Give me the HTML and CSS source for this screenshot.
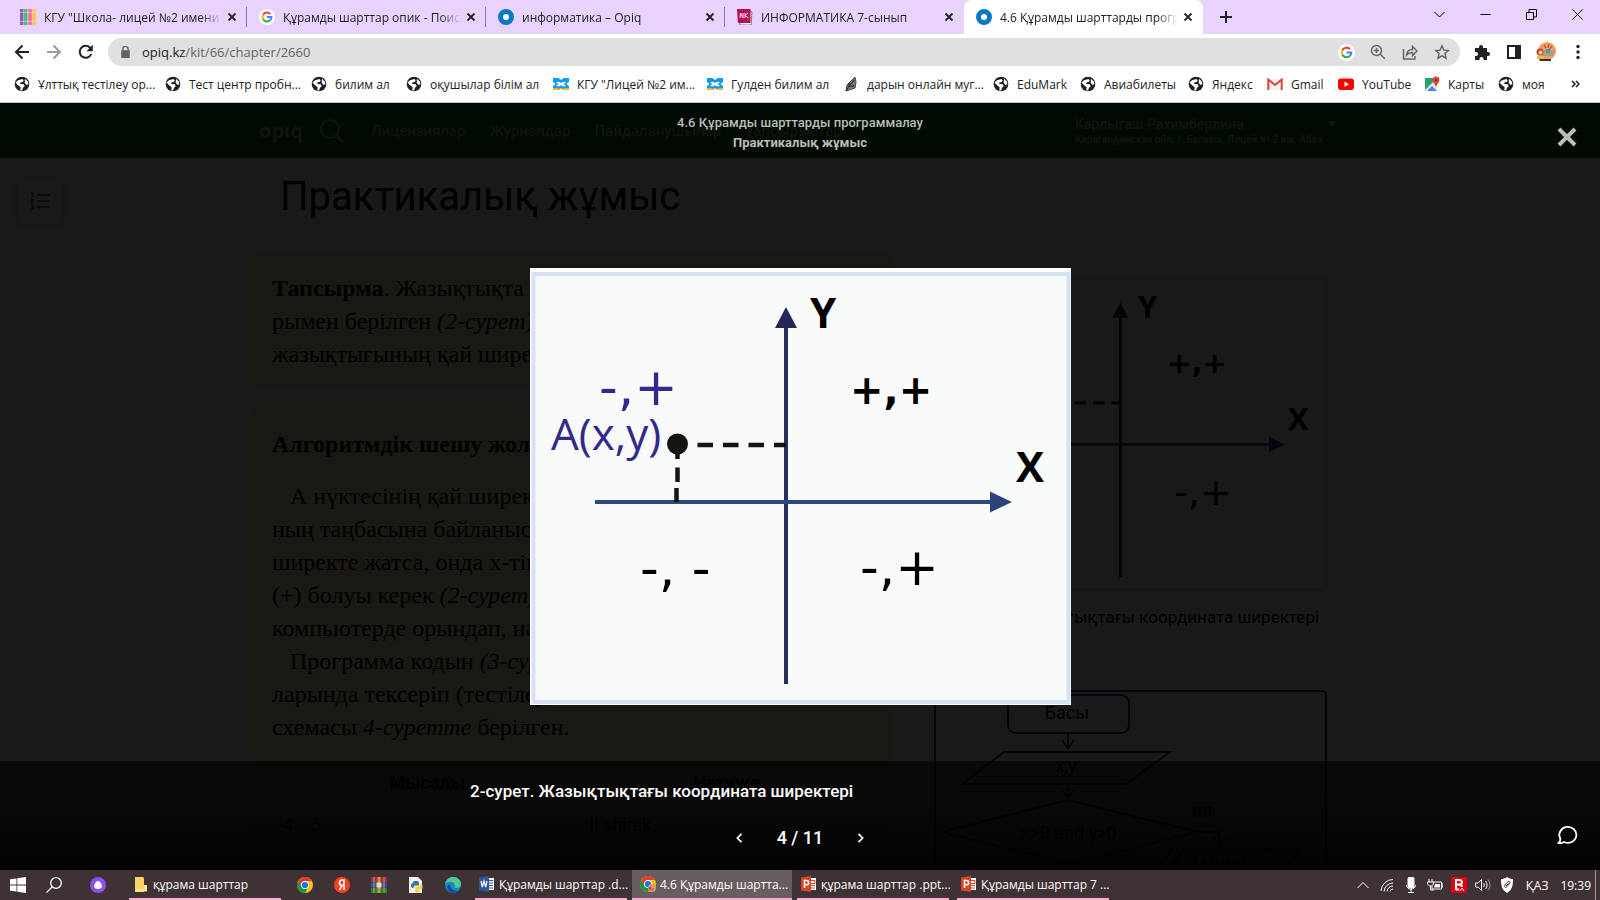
FILE: index.html
```html
<!DOCTYPE html>
<html lang="kk">
<head>
<meta charset="utf-8">
<title>4.6 Құрамды шарттарды программалау</title>
<link rel="stylesheet" href="styles.css">
</head>
<body>
<svg class="sprite" aria-hidden="true">
  <symbol id="globe" viewBox="0 0 16 16"><circle cx="8" cy="8" r="7.3" fill="#202124"/><path d="M1.500 6.500 4 4.200 8.500 3l1.200 1.400L8.500 6 6.300 6.400 6.300 8l3.500.300.900 1.900L9 11.800l-.900 2.700H6.300l.300-3.300L3.800 9z" fill="#fff"/><path d="m11 2.800 2.800 2.600.600 3-2.200.300-1.500-2z" fill="#fff"/></symbol>
  <symbol id="google" viewBox="0 0 18 18"><circle cx="9" cy="9" r="9" fill="#fff"/><g fill="none" stroke-width="2.300"><path d="M4.600 6.500A5 5 0 0 1 12.700 5.600" stroke="#ea4335"/><path d="M4.600 6.500a5 5 0 0 0 0 5" stroke="#fbbc05"/><path d="M4.600 11.400a5 5 0 0 0 7.800 1.300" stroke="#34a853"/><path d="M9 9h5a5 5 0 0 1-1.600 3.700" stroke="#4285f4"/></g></symbol>
  <symbol id="opiq" viewBox="0 0 16 16"><circle cx="8" cy="8" r="5.500" fill="#fff" stroke="#0879c4" stroke-width="5"/></symbol>
  <symbol id="cross" viewBox="0 0 10 10"><path d="m1.500 1.500 7 7m0-7-7 7" stroke="#202124" stroke-width="1.800"/></symbol>
  <symbol id="bilim" viewBox="0 0 16 16"><path d="M0 2h5.500L8 4l2.500-2H16v4l-2.500 2 2.500 2v4h-5.500L8 12l-2.500 2H0v-4l2.500-2L0 6z" fill="#129bf4"/><path d="M3.500 6h3L8 7l1.500-1h3v1L10 8l2.500 1.200v1h-3L8 9l-1.500 1.200h-3v-1L6 8 3.500 7z" fill="#fff"/><path d="M0 12h5l1 1 2-1 2 1 1-1h5v2h-5.500L8 12.800 5.500 14H0z" fill="#f5b32c"/></symbol>
  <symbol id="chrome" viewBox="0 0 16 16"><circle cx="8" cy="8" r="8" fill="#fbc116"/><path d="M1.070 4A8 8 0 0 1 14.930 4H8L4.540 10z" fill="#e33b2e"/><path d="M1.070 4A8 8 0 0 0 8 16l3.460-6H4.540z" fill="#229342"/><circle cx="8" cy="8" r="4" fill="#fff"/><circle cx="8" cy="8" r="3.100" fill="#1a73e8"/></symbol>
  <symbol id="ppt" viewBox="0 0 16 16"><path d="M8 2h7v12H8z" fill="#fff"/><path d="M10 4.500h4v3h-4M10 9.500h4M10 12h4" stroke="#d24726" fill="none"/><path d="M0 1.500 10 0v16L0 14.500z" fill="#d24726"/><path d="M3.500 12V4.500H5.500a2 2 0 0 1 0 4.300h-2" fill="none" stroke="#fff" stroke-width="1.600"/></symbol>
</svg>

<header class="browser">
  <div class="tabstrip">
    <nav class="tabs" aria-label="Tabs">
      <div class="tab"><svg viewBox="0 0 16 16"><path fill="#8b62b5" d="M0 0h3.500v16H0z"/><path fill="#54b878" d="M4 0h3.500v16H4z"/><path fill="#fa6d92" d="M8.300 0h3.500v16H8.300z"/><path fill="#fdc14f" d="M12.500 0H16v16h-3.500z"/><path fill="#fff" opacity=".4" d="M0 3h16v1H0zM0 12h16v1H0z"/></svg><span class="tab-title">КГУ "Школа- лицей №2 имени А</span><button aria-label="Close tab"><svg><use href="#cross"/></svg></button></div>
      <div class="tab"><svg><use href="#google"/></svg><span class="tab-title">Құрамды шарттар опик - Поиск</span><button aria-label="Close tab"><svg><use href="#cross"/></svg></button></div>
      <div class="tab"><svg><use href="#opiq"/></svg><span class="tab-title">информатика – Opiq</span><button aria-label="Close tab"><svg><use href="#cross"/></svg></button></div>
      <div class="tab"><svg viewBox="0 0 16 16"><path d="m3 2 12 1-1 13H3z" fill="#fff" stroke="#8f6c70"/><path d="M0 0h13.500v14H1z" fill="#b90d55"/><path d="m3 9 .5-5 2.500 5V4m2 0v5m3-5L8 6.500 11.500 9" fill="none" stroke="#fff" stroke-width=".9"/></svg><span class="tab-title">ИНФОРМАТИКА 7-сынып</span><button aria-label="Close tab"><svg><use href="#cross"/></svg></button></div>
      <div class="tab active"><svg><use href="#opiq"/></svg><span class="tab-title">4.6 Құрамды шарттарды програ</span><button aria-label="Close tab"><svg><use href="#cross"/></svg></button></div>
      <button class="newtab" aria-label="New tab"><svg viewBox="0 0 12 12"><path d="M6 0v12M0 6h12" stroke="#202124" stroke-width="2"/></svg></button>
    </nav>
    <div class="window-controls">
      <button aria-label="Search tabs"><svg viewBox="0 0 11 11"><path d="m.5 3 5 5 5-5"/></svg></button>
      <button aria-label="Minimize"><svg viewBox="0 0 11 11"><path d="M.5 5.500h10"/></svg></button>
      <button aria-label="Restore"><svg viewBox="0 0 11 11"><path d="M.5 3.500h7v7h-7zM3 3V.5h7.500V8H8"/></svg></button>
      <button aria-label="Close"><svg viewBox="0 0 11 11"><path d="m.5.5 10 10m0-10-10 10"/></svg></button>
    </div>
  </div>
  <div class="toolbar">
    <button aria-label="Back"><svg viewBox="0 0 16 16"><path d="M15 8H2m6.500-6.500L2 8l6.500 6.500" fill="none" stroke="#202124" stroke-width="2"/></svg></button>
    <button aria-label="Forward"><svg viewBox="0 0 16 16"><path d="M1 8h13M7.500 1.500 14 8l-6.500 6.500" fill="none" stroke="#9c9c9c" stroke-width="2"/></svg></button>
    <button aria-label="Reload"><svg viewBox="0 0 16 16"><path d="M13.300 10A6 6 0 1 1 12.400 4" fill="none" stroke="#202124" stroke-width="2"/><path d="M14.800.8v6.400H8.500z" fill="#202124"/></svg></button>
    <div class="omnibox">
      <svg class="lock" viewBox="0 0 10 14"><path d="M0 5h10v9H0z" fill="#5f6368"/><path d="M2 6V3.500a3 3 0 0 1 6 0V6" fill="none" stroke="#5f6368" stroke-width="1.600"/></svg>
      <a class="url" href="#"><b>opiq.kz</b>/kit/66/chapter/2660</a>
      <button aria-label="Google"><svg><use href="#google"/></svg></button>
      <button aria-label="Zoom"><svg viewBox="0 0 16 16" class="line"><circle cx="6.500" cy="6.500" r="5"/><path d="m10.300 10.300 4.500 4.500M4 6.500h5M6.500 4v5" /></svg></button>
      <button aria-label="Share"><svg viewBox="0 0 16 16" class="line"><path d="M1.500 5v10H13v-3M4.500 11c.5-4 3-5.500 6-5.500V2.500L15 7l-4.500 4.500v-3c-3 0-4.500.8-6 2.500z"/></svg></button>
      <button aria-label="Bookmark"><svg viewBox="0 0 16 16" class="line"><path d="m8 1.800 1.900 4.300 4.600.4-3.500 3.100 1 4.600L8 11.800l-4 2.400 1-4.600-3.500-3.100 4.600-.4z"/></svg></button>
    </div>
    <button aria-label="Extensions"><svg viewBox="0 0 16 16"><path d="M1 4h4V3a2 2 0 0 1 4 0v1h4v4h1a2 2 0 0 1 0 4h-1v4H9.500v-1a2 2 0 0 0-4 0v1H1v-4h1a2 2 0 0 0 0-4H1z" fill="#202124"/></svg></button>
    <button aria-label="Side panel"><svg viewBox="0 0 16 16"><path d="M2 2h12v12H2z" fill="none" stroke="#202124" stroke-width="2"/><path d="M9 2h5v12H9z" fill="#202124"/></svg></button>
    <button aria-label="Profile"><svg class="avatar" viewBox="0 0 20 20"><circle cx="11" cy="9" r="9" fill="#f59a5d"/><path d="m8 3 2 3m3-4-1 4m4-2-2 3" stroke="#a33a2c"/><path d="M8 8h10v6H7z" fill="#ae9c83"/><path d="M10 7h4v4h-4z" fill="#3d9e9b"/><circle cx="4" cy="10" r="3.500" fill="#c84225"/><circle cx="4.500" cy="10.500" r="2" fill="#f8cf9d"/><path d="M1 14h7v3H1z" fill="#edbd31"/><path d="M3 17h12v2H4z" fill="#33313a"/></svg></button>
    <button aria-label="Menu"><svg viewBox="0 0 16 16"><g fill="#202124"><circle cx="8" cy="2.500" r="1.700"/><circle cx="8" cy="8" r="1.700"/><circle cx="8" cy="13.500" r="1.700"/></g></svg></button>
  </div>
  <nav class="bookmarks" aria-label="Bookmarks">
    <a href="#"><svg><use href="#globe"/></svg>Ұлттық тестілеу ор...</a>
    <a href="#"><svg><use href="#globe"/></svg>Тест центр пробн...</a>
    <a href="#"><svg><use href="#globe"/></svg>билим ал</a>
    <a href="#"><svg><use href="#globe"/></svg>оқушылар білім ал</a>
    <a href="#"><svg><use href="#bilim"/></svg>КГУ "Лицей №2 им...</a>
    <a href="#"><svg><use href="#bilim"/></svg>Гулден билим ал</a>
    <a href="#"><svg viewBox="0 0 16 16"><path d="M3 15 4 9l6-6 2-2 1 5-1 6-6 2z" fill="#777" stroke="#444"/><path d="m3 15 3-5 5-6M6 10h5M6 10V7" fill="none" stroke="#222"/></svg>дарын онлайн муг...</a>
    <a href="#"><svg><use href="#globe"/></svg>EduMark</a>
    <a href="#"><svg><use href="#globe"/></svg>Авиабилеты</a>
    <a href="#"><svg><use href="#globe"/></svg>Яндекс</a>
    <a href="#"><svg viewBox="0 0 16 16"><path d="M2 3h12v11H2z" fill="#f1f1f1"/><path d="M1.300 14V3.500L8 9l6.700-5.500V14" fill="none" stroke="#db4437" stroke-width="2"/></svg>Gmail</a>
    <a href="#"><svg viewBox="0 0 16 16"><rect y="2.500" width="16" height="11.500" rx="3" fill="#f00"/><path d="m6.500 5.500 4.500 2.700-4.500 2.700z" fill="#fff"/></svg>YouTube</a>
    <a href="#"><svg viewBox="0 0 16 16"><path d="M1 2h12v13H1z" fill="#1fa463"/><path d="M1 14 12 3l1 2v10H1z" fill="#e8e8e8"/><path d="m3 15 5-5 5 5z" fill="#4a86e8"/><path d="M12 11C11 8 8.500 6.500 8.500 4a3.500 3.500 0 0 1 7 0c0 2.500-2.500 4-3.500 7z" fill="#dd4b3e"/><circle cx="12" cy="4" r="1.200" fill="#84241c"/></svg>Карты</a>
    <a href="#"><svg><use href="#globe"/></svg>моя</a>
    <button aria-label="More bookmarks"><svg viewBox="0 0 10 8"><path d="m1 1 3 3-3 3m4-6 3 3-3 3" fill="none" stroke="#202124" stroke-width="1.500"/></svg></button>
  </nav>
</header>

<main class="viewport">
  <div class="site">
    <div class="site-header">
      <div class="wrap site-bar">
        <b class="logo">opıq</b>
        <svg class="site-search" viewBox="0 0 24 24"><circle cx="10" cy="10" r="9"/><path d="m16.500 16.500 7 7"/></svg>
        <nav class="site-nav"><a href="#">Лицензиялар</a><a href="#">Журналдар</a><a href="#">Пайдаланушылар</a><a href="#">Тапсырыстар</a></nav>
        <div class="user"><span>Карлыгаш Рахимберлина</span><small>Карагандинская обл, г. Балхаш, Лицей № 2 им. Абая</small></div>
        <svg class="caret" viewBox="0 0 10 6"><path d="M0 0h10L5 6z"/></svg>
      </div>
    </div>
    <button class="contents" aria-label="Contents"><svg viewBox="0 0 20 18"><path d="M7 3h13M7 9h13M7 15h13M1 1h1.500v4M1 7.500h2L1 10.500h2M1 13h2v3.500H1" fill="none" stroke="#1d7a1d" stroke-width="1.500"/></svg></button>
    <div class="wrap">
      <h1>Практикалық жұмыс</h1>
      <div class="columns">
        <div class="text-column">
          <section class="task"><p><b>Тапсырма</b>. Жазықтықта<br>рымен берілген <i>(2-сурет)</i><br>жазықтығының қай ширегінде</p></section>
          <section class="task solution">
            <h2>Алгоритмдік шешу жолы</h2>
            <p>&nbsp;&nbsp; А нүктесінің қай ширекте<br>ның таңбасына байланысты<br>ширекте жатса, онда x-тің<br>(+) болуы керек <i>(2-сурет)</i><br>компьютерде орындап, нәтиже<br>&nbsp;&nbsp; Программа кодын <i>(3-сурет)</i><br>ларында тексеріп (тестілеу)<br>схемасы <i>4-суретте</i> берілген.</p>
            <table><thead><tr><th>Мысалы</th><th>Нәтиже</th></tr></thead><tbody><tr><td>-4 &nbsp;&nbsp; 5</td><td>II shirek</td></tr></tbody></table>
          </section>
        </div>
        <aside class="figures">
          <figure>
            <svg viewBox="0 0 541 437"><use href="#plane"/></svg>
            <figcaption>2-сурет. Жазықтықтағы координата ширектері</figcaption>
          </figure>
          <figure>
            <svg class="flowchart" viewBox="0 0 394 260">
              <rect x="1" y="1" width="391" height="270" rx="4"/>
              <rect x="74" y="5" width="121" height="38" rx="8"/>
              <path d="M134 43v16m-6-9 6 9 6-9M70 62h166l-44 32H28zM134 94v14m-6-8 6 8 6-8M134 110l130 32-130 32L8 142zM264 142h21v14m-6-9 6 9 6-9M239 158h127l-26 35H210zM252 158l-30 35M134 174v20"/>
              <text x="133" y="29">Басы</text><text x="132" y="82">x,y</text><text x="135" y="149">x&gt;0 and y&gt;0</text><text x="268" y="127">ия</text><text x="287" y="179">I shirek</text>
            </svg>
          </figure>
        </aside>
      </div>
    </div>
  </div>

  <div class="lightbox" role="dialog" aria-label="2-сурет">
    <div class="lightbox-head"><span>4.6 Құрамды шарттарды программалау</span><b>Практикалық жұмыс</b>
      <button class="lightbox-close" aria-label="Жабу"><svg viewBox="0 0 20 20"><path d="m2 2 16 16m0-16L2 18"/></svg></button>
    </div>
    <div class="stage">
      <svg class="picture" viewBox="0 0 541 437">
        <g id="plane">
          <rect width="541" height="437" fill="#fff"/>
          <rect x="3.500" y="6" width="535" height="428" fill="#f9fbfa" stroke="#d7e1f4" stroke-width="4"/>
          <path d="M256 416V55" stroke="#292d60" stroke-width="4"/><path d="m256 39 11 21h-22z" fill="#242858"/>
          <path d="M65 234h400" stroke="#2f4880" stroke-width="4"/><path d="m482 234-22 10.500v-21z" fill="#2b4378"/>
          <path d="M167.500 177H256" stroke="#15140f" stroke-width="4.500" stroke-dasharray="15.500 10"/>
          <path d="M147.500 186v5m0 8.500V214m-1 6v14" stroke="#15140f" stroke-width="4.500"/>
          <circle cx="147.500" cy="176" r="10.500" fill="#15140f"/>
          <g class="axis"><text x="280" y="60">Y</text><text x="486" y="214">X</text></g>
          <text class="point" x="21" y="182">A(x,y)</text>
          <g class="sign"><text class="violet" x="69" y="137">-,+</text><text x="110" y="318">-, -</text><text x="330" y="317">-,+</text></g>
          <text class="sign-bold" x="320" y="136">+,+</text>
        </g>
      </svg>
    </div>
    <div class="lightbox-foot">
      <div class="foot-inner">
        <p>2-сурет. Жазықтықтағы координата ширектері</p>
        <div class="pager"><button aria-label="Алдыңғы"><svg viewBox="0 0 8 12"><path d="M7 1 2 6l5 5"/></svg></button><span>4 / 11</span><button aria-label="Келесі"><svg viewBox="0 0 8 12"><path d="m1 1 5 5-5 5"/></svg></button></div>
      </div>
      <button class="chat" aria-label="Пікір"><svg viewBox="0 0 22 20"><path d="M3.300 13.500A8.500 8 0 1 1 7 17c-1.500 1-3.500 1.500-5.500 1 1.500-1.200 2-2.700 1.800-4.500z" fill="none" stroke="#fff" stroke-width="1.800"/></svg></button>
    </div>
  </div>
</main>

<footer class="taskbar">
  <button class="sys" aria-label="Start"><svg viewBox="0 0 16 16"><path d="m0 2.300 6.500-.9v6.200H0zM7.300 1.300 16 0v7.600H7.300zM0 8.400h6.500v6.200L0 13.700zM7.300 8.400H16V16l-8.700-1.200z" fill="#fff"/></svg></button>
  <button class="sys" aria-label="Search"><svg viewBox="0 0 16 16"><circle cx="10" cy="6" r="5.300" fill="none" stroke="#fff" stroke-width="1.300"/><path d="M6.300 9.800.5 15.600" stroke="#fff" stroke-width="1.300"/></svg></button>
  <button class="sys alice" aria-label="Alice"><svg viewBox="0 0 16 16"><circle cx="8" cy="8" r="8" fill="#8c4dfa"/><path d="M8 4c2 0 4 3.500 4 5.300C12 11 10 12 8 12s-4-1-4-2.700C4 7.500 6 4 8 4z" fill="#fff"/></svg></button>
  <button class="task-button"><svg viewBox="0 0 16 16"><path d="M2 1h8l1 1v14H2z" fill="#f8d264"/><path d="M11 9h3v6.500H3V13h8z" fill="#fbe59b"/></svg><span>құрама шарттар</span></button>
  <div class="pinned">
    <button aria-label="Chrome"><svg><use href="#chrome"/></svg></button>
    <button aria-label="Yandex"><svg viewBox="0 0 16 16"><circle cx="8" cy="8" r="8" fill="#fc3f1d"/><path d="M10 13V3H8.500a2.700 2.700 0 0 0-1 5.300H10M8 8.500 5.500 13" fill="none" stroke="#fff" stroke-width="1.600"/></svg></button>
    <button aria-label="WinRAR"><svg viewBox="0 0 16 16"><path d="M0 0h16v5H0z" fill="#a62c4c"/><path d="M0 5.500h16v5H0z" fill="#3151b5"/><path d="M0 11h16v5H0z" fill="#27853b"/><path d="M6.500 0h3v16h-3z" fill="#c99a33"/><path d="M5.500 5.500h5v5h-5z" fill="#eadbae"/><path d="M3 0v16M13 0v16" stroke="#e0a549" stroke-width=".8"/></svg></button>
    <button aria-label="Python"><svg viewBox="0 0 16 16"><path d="M1 0h9l4 4v12H1z" fill="#f2f2f2"/><path d="M5 9V5.500C5 4 6 4 8 4s3 .4 3 2v2.500H7C5.500 8.500 6 11 5 11s-2-.5-2-2.500S4 6 6 6" fill="#3974a8"/><path d="M12 7c2 0 2.500 1 2.500 3S14 12.500 12.500 12.500H10v1h2c0 1.500-1 2-2.500 2S7 15 7 13.500V11c0-1 .5-1.500 1.500-1.500H11c1 0 1-1 1-2.500z" fill="#ffd141"/></svg></button>
    <button aria-label="Edge"><svg viewBox="0 0 16 16"><circle cx="8" cy="8" r="8" fill="#1785cf"/><path d="M.3 7C1 2.500 4.500 0 8 0c5 0 8 3.500 8 7 0 2.500-2 4-4.500 4-2 0-2-1-1.500-2C10 5 3 3 .3 7z" fill="#4dcc8d"/><path d="M5.500 8C5 12 8 14.500 13.500 13.500 9 18 1.500 15 2.500 9.500 3 7.500 4 7 5.500 8z" fill="#114f92"/></svg></button>
  </div>
  <button class="task-button"><svg viewBox="0 0 16 16"><path d="M8 2h7v12H8z" fill="#fff"/><path d="M10 4.500h4M10 7h4M10 9.500h4M10 12h4" stroke="#2b579a"/><path d="M0 1.500 10 0v16L0 14.500z" fill="#2b579a"/><path d="m2 5 1.300 6L5 5l1.700 6L8 5" fill="none" stroke="#fff" stroke-width="1.200"/></svg><span>Құрамды шарттар .d...</span></button>
  <button class="task-button current"><svg viewBox="0 0 16 16"><use href="#chrome"/><circle cx="12" cy="12" r="4" fill="#e49b6c"/><path d="M9 12h5v3h-4z" fill="#b8866d"/><circle cx="10" cy="12" r="1.300" fill="#c93d27"/></svg><span>4.6 Құрамды шартта...</span></button>
  <button class="task-button"><svg><use href="#ppt"/></svg><span>құрама шарттар .ppt...</span></button>
  <button class="task-button"><svg><use href="#ppt"/></svg><span>Құрамды шарттар 7 ...</span></button>
  <div class="tray">
    <svg viewBox="0 0 16 16"><path d="m2.500 11 5.500-5.500 5.500 5.500"/></svg>
    <svg viewBox="0 0 16 16"><path d="M2 14A12 12 0 0 1 14 2.500M5 14.500a9 9 0 0 1 9-8.500M8 14.500a6 6 0 0 1 6-5.500M11 14.500a3 3 0 0 1 3-2.500"/></svg>
    <svg viewBox="0 0 16 16"><rect x="5" y="0" width="6" height="11" rx="2" fill="#fff"/><path d="M3.500 8c0 5.500 9 5.500 9 0M8 12v3M5 15.500h6"/></svg>
    <svg viewBox="0 0 16 16"><path d="M6 5h8.500v7H5V9M2 2v3m3-3v3M.5 5h6v2l-2 2h-2l-2-2zM3.500 9v4H7M14.500 7H16v3h-1.500"/><path d="M8 7h5v3.500H7z" fill="#fff" stroke="none"/></svg>
    <svg viewBox="0 0 16 16"><path d="M0 0h16v16H0z" fill="#e3000f" stroke="none"/><path d="M5 13V3h3.500c3.300 0 3 4.500 0 4.500H5M8.500 8c1.500 0 2.500 1 2.500 2M5 12.500h3" stroke-width="2"/><path d="m9 14 2-3 2 3"/></svg>
    <svg viewBox="0 0 16 16"><path d="M.5 6h2.500l3.500-3.500v11L3 10H.5zM8.500 6c1 1 1 3 0 4M10.500 4c2 2 2 6 0 8"/><path d="M13 2.500c2.500 3 2.500 8 0 11" opacity=".5"/></svg>
    <svg viewBox="0 0 16 16"><path d="M8 0c2 1.500 4 2 6 2 0 7-1 11-6 14C3 13 2 9 2 2c2 0 4-.5 6-2z" fill="#fff" stroke="none"/><path d="M6 8 9 4.500c1.500-.5 2.500 1 1.500 2L8 9.500c-1.500 2-4 0-2-2M7 9l2.500-2.500" stroke="#3c3033"/></svg>
    <span class="lang">ҚАЗ</span><time>19:39</time>
  </div>
</footer>
</body>
</html>
```
FILE: styles.css
```css
* { box-sizing: border-box; }
body { margin: 0; height: 100vh; display: flex; flex-direction: column; overflow: hidden; font-family: "Open Sans", "Noto Sans", sans-serif; font-size: 12px; color: #202124; background: #000; }
button { border: 0; padding: 0; margin: 0; background: none; font: inherit; color: inherit; display: flex; align-items: center; justify-content: center; }
a { color: inherit; text-decoration: none; }
svg { display: block; flex: none; width: 16px; height: 16px; }
.sprite { position: absolute; width: 0; height: 0; }

/* Browser frame */
.browser { flex: none; background: #fff; border-bottom: 1px solid #c4c4c4; }
.tabstrip { display: flex; justify-content: space-between; height: 34px; background: #e8d3ff; }
.tabs { display: flex; padding-left: 8px; }
.tab { display: flex; align-items: center; width: 239px; padding: 0 7px 0 12px; background: linear-gradient(#877a96, #877a96) right center / 1px 20px no-repeat; }
.tab:nth-child(4) { background: none; }
.tab.active { background: #fff; border-radius: 8px 8px 0 0; }
.tab-title { flex: 1; min-width: 0; margin: 0 2px 0 8px; white-space: nowrap; overflow: hidden; mask-image: linear-gradient(90deg, #000 88%, transparent); }
.tab button { width: 16px; height: 16px; }
.tab button svg { width: 10px; height: 10px; }
.newtab { width: 46px; }
.newtab svg { width: 12px; height: 12px; }
.window-controls { display: flex; }
.window-controls button { width: 46px; height: 28px; }
.window-controls svg { width: 11px; height: 11px; fill: none; stroke: #000; }
.toolbar { display: flex; align-items: center; height: 36px; padding: 0 6px; }
.toolbar > button { width: 32px; height: 32px; }
.omnibox { flex: 1; display: flex; align-items: center; height: 28px; margin: 0 6px; padding: 0 2px 0 13px; border-radius: 14px; background: #e0e0e0; }
.omnibox button { width: 32px; }
.omnibox button:nth-of-type(1) svg { width: 17px; height: 17px; }
.lock { width: 9px; height: 12px; }
.url { flex: 1; margin-left: 12px; font-size: 13px; color: #5f6368; }
.url b { font-weight: 400; color: #202124; }
.line { fill: none; stroke: #5f6368; stroke-width: 1.400; }
.toolbar .avatar { width: 20px; height: 20px; }
.bookmarks { display: grid; grid-template-columns: 151px 146px 95px 147px 154px 136px 150px 87px 108px 79px 71px 86px 74px 1fr 24px; align-items: center; height: 32px; padding: 0 12px 4px 14px; }
.bookmarks a { display: flex; align-items: center; gap: 8px; white-space: nowrap; }
.bookmarks button svg { width: 10px; height: 8px; }

/* Textbook page */
.viewport { flex: 1; min-height: 0; position: relative; overflow: hidden; background: #fff; font-family: Roboto, sans-serif; color: #000; }
.wrap { max-width: 1100px; margin: 0 auto; }
.site-header { background: #006a00; }
.site-bar { display: flex; align-items: center; height: 55px; padding: 0 13px 0 9px; font-size: 15px; font-weight: 500; color: #b4b4b4; }
.logo { width: 61px; font: 700 20px "Open Sans", sans-serif; }
.site-search { width: 24px; height: 24px; fill: none; stroke: #b4b4b4; stroke-width: 2; }
.site-nav { flex: 1; display: flex; gap: 24px; margin-left: 27px; }
.user { width: 240px; white-space: nowrap; font-size: 14px; line-height: 16px; }
.user small { display: block; margin-top: 2px; font-size: 10px; font-weight: 700; line-height: 12px; }
.caret { width: 10px; height: 6px; margin: 0 0 14px 12px; fill: #b4b4b4; }
.contents { position: absolute; left: 18px; top: 75px; width: 44px; height: 46px; border-radius: 4px; box-shadow: 0 1px 8px #0004; }
.contents svg { width: 20px; height: 18px; }
h1 { margin: 0; padding: 16px 30px 32px; font-size: 40px; font-weight: 400; line-height: 46px; }
.columns { display: flex; gap: 20px; align-items: flex-start; }
.text-column { flex: 1; display: flex; flex-direction: column; gap: 18px; }
.task { padding: 20px 22px 17px; border-radius: 8px; background: #fff5bc; font: 24px/33px "Liberation Serif", serif; }
.task p { margin: 0; white-space: nowrap; }
.solution { padding-top: 22px; }
.solution h2 { margin: 0 0 19px; font-size: 24px; line-height: 33px; }
.task table { width: 100%; margin-top: 18px; border-collapse: collapse; font: 18px/42px Roboto, sans-serif; }
.task th { padding: 0; font-weight: 700; }
.task th:first-child { width: 52%; }
.task td { padding: 0 6px; }
.figures { width: 438px; display: flex; flex-direction: column; gap: 20px; }
figure { margin: 0; padding: 22px 22px 20px; border-radius: 8px; box-shadow: 0 0 6px #0002; font-size: 17px; text-align: center; }
figure svg { width: 100%; height: auto; }
figcaption { margin-top: 14px; line-height: 22px; white-space: nowrap; }
.flowchart { fill: none; stroke: #123a7c; stroke-width: 2; font-size: 18px; }
.flowchart text { fill: #000; stroke: none; text-anchor: middle; }

/* Coordinate plane */
.axis text { font: 700 42px "Open Sans", sans-serif; }
.point { font: 44px "Open Sans", sans-serif; fill: #33298a; }
.sign text { font: 52px "DejaVu Sans", sans-serif; }
.sign .violet { fill: #33298a; }
.sign-bold { font: 700 40px "DejaVu Sans", sans-serif; }

/* Lightbox */
.lightbox { position: absolute; inset: 0; display: flex; flex-direction: column; background: #000000e6; }
.lightbox-head { position: relative; height: 55px; display: flex; flex-direction: column; align-items: center; padding-top: 10px; font-size: 13px; line-height: 20px; font-weight: 500; color: #b9bcb9; }
.lightbox-close { position: absolute; right: 23px; top: 24px; }
.lightbox-close svg { width: 20px; height: 20px; stroke: #b9bcb9; stroke-width: 4; }
.stage { flex: 1; min-height: 0; display: flex; align-items: center; justify-content: center; padding-top: 54px; }
.picture { width: 541px; height: 437px; }
.lightbox-foot { position: relative; height: 109px; color: #fff; font-size: 17px; background: linear-gradient(#000000a6 30%, #000000e6); }
.foot-inner { width: 660px; margin: 0 auto; padding-top: 18px; }
.foot-inner p { margin: 0; line-height: 24px; font-weight: 500; }
.pager { display: flex; align-items: center; justify-content: center; gap: 34px; margin-top: 23px; font-size: 18px; line-height: 24px; font-weight: 500; }
.pager svg { width: 8px; height: 10px; fill: none; stroke: #fff; stroke-width: 2; }
.chat { position: absolute; right: 21px; bottom: 25px; }
.chat svg { width: 22px; height: 20px; }

/* Taskbar */
.taskbar { flex: none; display: flex; height: 30px; padding-right: 4px; color: #fff; background: #3e3234; }
.sys { width: 36px; }
.sys.alice { width: 52px; margin-right: 5px; }
.pinned { display: flex; margin-right: 4px; }
.pinned button { width: 37px; }
.task-button { width: 152px; margin-right: 5px; padding: 0 0 0 4px; gap: 4px; justify-content: flex-start; border-bottom: 2px solid #ffabd0; white-space: nowrap; }
.task-button.current { width: 160px; padding-left: 8px; background: #685d5f; }
.current + .task-button { margin-right: 8px; }
.tray { flex: 1; display: flex; align-items: center; justify-content: flex-end; gap: 8px; padding-right: 4px; border-right: 1px solid #a09a9b; white-space: nowrap; }
.tray svg { fill: none; stroke: #fff; }
.lang { margin: 0 4px 0 3px; }
```
